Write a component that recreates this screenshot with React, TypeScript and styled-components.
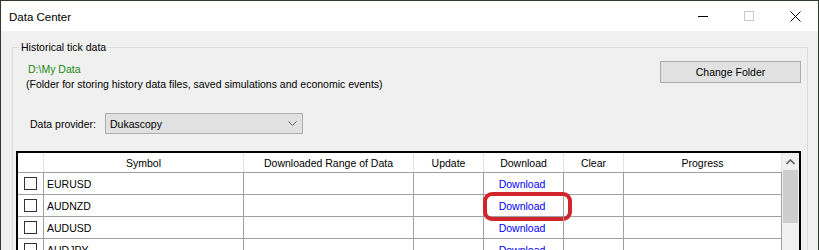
import React from 'react';
import styled, { createGlobalStyle } from 'styled-components';

const GlobalStyle = createGlobalStyle`
  html, body {
    margin: 0;
    padding: 0;
    background: #1e2a1c;
  }
  * {
    box-sizing: border-box;
  }
`;

const Window = styled.div`
  width: 819px;
  height: 250px;
  overflow: hidden;
  border: 1px solid #2f3a2c;
  border-bottom: none;
  background: #f0f0f0;
  font-family: "Liberation Sans", Arial, sans-serif;
  font-size: 10.5px;
  color: #000;
  display: flex;
  flex-direction: column;
`;

const TitleBar = styled.div`
  height: 30px;
  flex: none;
  background: #fff;
  display: flex;
  align-items: center;
  padding-left: 8px;
`;

const Title = styled.div`
  flex: 1;
  font-size: 11.5px;
  padding-top: 1px;
`;

const Caption = styled.div`
  display: flex;
  height: 30px;
`;

const CaptionButton = styled.div`
  width: 46px;
  height: 30px;
  display: flex;
  align-items: center;
  justify-content: center;
`;

const Body = styled.div`
  flex: 1;
  padding: 9px 10px 0 11px;
`;

const GroupBox = styled.fieldset`
  margin: 0;
  padding: 0 6px 0 0;
  border: 1px solid #dcdcdc;
  min-width: 0;
`;

const Legend = styled.legend`
  margin-left: 6px;
  padding: 0 2px;
  line-height: 14px;
`;

const TopRow = styled.div`
  display: flex;
  justify-content: space-between;
  align-items: flex-start;
  margin-top: 7px;
`;

const FolderInfo = styled.div`
  padding: 1px 0 0 13px;
  line-height: 15px;
`;

const FolderPath = styled.div`
  color: #1b8a14;
  margin-left: 2px;
`;

const PushButton = styled.button`
  width: 141px;
  height: 22px;
  background: #e1e1e1;
  border: 1px solid #adadad;
  font-family: inherit;
  font-size: 10.5px;
  color: #000;
  padding: 0;
`;

const ProviderRow = styled.div`
  display: flex;
  align-items: center;
  margin-top: 21px;
  padding-left: 17px;
`;

const FieldLabel = styled.span`
  width: 75px;
`;

const ComboBox = styled.div`
  width: 198px;
  height: 21px;
  background: #e1e1e1;
  border: 1px solid #adadad;
  display: flex;
  align-items: center;
  justify-content: space-between;
  padding: 0 5px 0 4px;
`;

const Table = styled.div`
  margin: 17px 0 0 3px;
  width: 785px;
  border: 2px solid #000;
  border-bottom: none;
  display: flex;
  background: #fff;
  height: 120px;
`;

const Grid = styled.div`
  flex: 1;
  display: flex;
  flex-direction: column;
`;

const Row = styled.div<{ $header?: boolean }>`
  flex: none;
  display: grid;
  grid-template-columns: 26px 200px 170px 70px 80px 60px 158px;
  height: ${p => (p.$header ? 20 : 22)}px;
  border-bottom: 1px solid #a0a0a0;
`;

const Cell = styled.div<{ $header?: boolean; $center?: boolean }>`
  position: relative;
  display: flex;
  align-items: center;
  justify-content: ${p => (p.$center || p.$header ? 'center' : 'flex-start')};
  padding-left: ${p => (p.$center || p.$header ? 0 : 3)}px;
  border-right: 1px solid ${p => (p.$header ? '#e3e3e3' : '#a0a0a0')};
  white-space: nowrap;
`;

const CheckBox = styled.div`
  width: 13px;
  height: 13px;
  border: 1px solid #333;
  background: #fff;
`;

const LinkText = styled.span`
  color: #0000ff;
  margin-right: 3px;
`;

const Highlight = styled.div`
  position: absolute;
  left: -1px;
  right: -9px;
  top: -3px;
  bottom: -5px;
  border: 4px solid #d2252b;
  border-radius: 9px;
  pointer-events: none;
`;

const ScrollBar = styled.div`
  width: 17px;
  background: #f0f0f0;
  display: flex;
  flex-direction: column;
  align-items: center;
`;

const ScrollArrow = styled.div`
  height: 17px;
  width: 17px;
  display: flex;
  align-items: center;
  justify-content: center;
`;

const ScrollThumb = styled.div`
  width: 15px;
  height: 53px;
  background: #cdcdcd;
`;

const symbols = ['EURUSD', 'AUDNZD', 'AUDUSD', 'AUDJPY', 'CADJPY'];
const headers = ['', 'Symbol', 'Downloaded Range of Data', 'Update', 'Download', 'Clear', 'Progress'];

export default function App() {
  return (
    <>
      <GlobalStyle />
      <Window>
        <TitleBar>
          <Title>Data Center</Title>
          <Caption>
            <CaptionButton>
              <svg width="10" height="10" viewBox="0 0 10 10">
                <line x1="0" y1="5.5" x2="10" y2="5.5" stroke="#000" strokeWidth="1" />
              </svg>
            </CaptionButton>
            <CaptionButton>
              <svg width="10" height="10" viewBox="0 0 10 10">
                <rect x="0.5" y="0.5" width="9" height="9" fill="none" stroke="#c8c8c8" strokeWidth="1" />
              </svg>
            </CaptionButton>
            <CaptionButton>
              <svg width="11" height="11" viewBox="0 0 11 11">
                <path d="M0.5 0.5 L10.5 10.5 M10.5 0.5 L0.5 10.5" stroke="#000" strokeWidth="1" />
              </svg>
            </CaptionButton>
          </Caption>
        </TitleBar>
        <Body>
          <GroupBox>
            <Legend>Historical tick data</Legend>
            <TopRow>
              <FolderInfo>
                <FolderPath>D:\My Data</FolderPath>
                <div>(Folder for storing history data files, saved simulations and economic events)</div>
              </FolderInfo>
              <PushButton>Change Folder</PushButton>
            </TopRow>
            <ProviderRow>
              <FieldLabel>Data provider:</FieldLabel>
              <ComboBox>
                <span>Dukascopy</span>
                <svg width="9" height="5" viewBox="0 0 9 5">
                  <path d="M0.5 0.5 L4.5 4.5 L8.5 0.5" fill="none" stroke="#606060" strokeWidth="1" />
                </svg>
              </ComboBox>
            </ProviderRow>
            <Table>
              <Grid>
                <Row $header>
                  {headers.map((h, i) => (
                    <Cell key={i} $header>{h}</Cell>
                  ))}
                </Row>
                {symbols.map((s, i) => (
                  <Row key={s}>
                    <Cell $center><CheckBox /></Cell>
                    <Cell>{s}</Cell>
                    <Cell />
                    <Cell />
                    <Cell $center>
                      <LinkText>Download</LinkText>
                      {i === 1 && <Highlight />}
                    </Cell>
                    <Cell />
                    <Cell />
                  </Row>
                ))}
              </Grid>
              <ScrollBar>
                <ScrollArrow>
                  <svg width="9" height="6" viewBox="0 0 9 6">
                    <path d="M0.5 5 L4.5 1 L8.5 5" fill="none" stroke="#606060" strokeWidth="1.6" />
                  </svg>
                </ScrollArrow>
                <ScrollThumb />
              </ScrollBar>
            </Table>
          </GroupBox>
        </Body>
      </Window>
    </>
  );
}
